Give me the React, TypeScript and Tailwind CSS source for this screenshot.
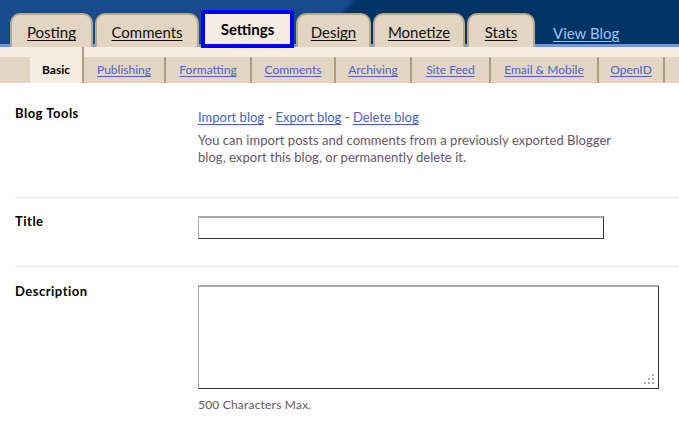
import React from 'react';

const mainTabs = [
    { label: 'Posting', w: 'w-[83px]' },
    { label: 'Comments', w: 'w-[104px]' },
    { label: 'Settings', w: 'w-[93px]', active: true },
    { label: 'Design', w: 'w-[75px]' },
    { label: 'Monetize', w: 'w-[92px]' },
    { label: 'Stats', w: 'w-[68px]' },
];

const subTabs = [
    { label: 'Basic', w: 'w-[54px]', active: true },
    { label: 'Publishing', w: 'w-[82px]' },
    { label: 'Formatting', w: 'w-[86px]' },
    { label: 'Comments', w: 'w-[84px]' },
    { label: 'Archiving', w: 'w-[76px]' },
    { label: 'Site Feed', w: 'w-[79px]' },
    { label: 'Email & Mobile', w: 'w-[108px]' },
    { label: 'OpenID', w: 'w-[66px]' },
];

const Row: React.FC<{ label: string; pt: string; pb: string; children: React.ReactNode; last?: boolean }> = ({ label, pt, pb, children, last }) => (
    <div className={`flex ml-[15px] ${pt} ${pb} ${last ? '' : 'border-b border-[#e8e8e8]'}`}>
        <div className="w-[183px] shrink-0 text-[13px] leading-[17px] font-bold tracking-[0.5px] text-black">{label}</div>
        <div className="flex-1">{children}</div>
    </div>
);

const App: React.FC = () => {
    return (
        <div className="w-[679px] h-[424px] overflow-hidden bg-white font-['Lato',sans-serif]">
            {/* header */}
            <div className="h-[47px] flex items-end bg-[radial-gradient(ellipse_235px_120px_at_140px_-45px,#1a4d90_0%,#164a8c_97%,#003366_100%)] border-b-[3px] border-[#6b97f0]">
                <div className="flex items-end pl-[10px] gap-[2px] -mb-[3px]">
                    {mainTabs.map(t =>
                        t.active ? (
                            <div key={t.label} className={`${t.w} h-[38px] -mb-[1px] flex items-center justify-center bg-[#f5ede3] border-[4px] border-[#0000ff] rounded-t-[3px] text-[15px] font-bold text-black relative`}>
                                {t.label}
                            </div>
                        ) : (
                            <div key={t.label} className={`${t.w} h-[34px] flex items-center justify-center pt-[3px] bg-[#e2d6c2] border-2 border-b-0 border-[#b7a78c] rounded-t-[10px] text-[15px] text-[#111] underline underline-offset-2`}>
                                {t.label}
                            </div>
                        )
                    )}
                    <a className="ml-[16px] mb-[5px] text-[15px] text-[#9cc3f5] underline underline-offset-2 leading-[18px]">View Blog</a>
                </div>
            </div>
            {/* cream band + sub nav */}
            <div className="h-[10px] bg-[#f5ece2]" />
            <div className="h-[26px] flex bg-[#e2d6c2] pl-[30px]">
                {subTabs.map(t => (
                    <div
                        key={t.label}
                        className={`${t.w} shrink-0 flex items-center justify-center text-[12px] border-r-2 border-[#b09c80] ${t.active ? 'bg-[#f5ece2] text-black font-bold -mt-[10px] pt-[10px]' : 'text-[#4a62d4] underline underline-offset-2'}`}
                    >
                        {t.label}
                    </div>
                ))}
            </div>

            {/* content */}
            <Row label="Blog Tools" pt="pt-[22px]" pb="pb-[31px]">
                <div className="mt-[4px] text-[13px] leading-[17px] text-[#555]">
                    <a className="text-[#3f5fd2] underline underline-offset-2">Import blog</a>
                    {' - '}
                    <a className="text-[#3f5fd2] underline underline-offset-2">Export blog</a>
                    {' - '}
                    <a className="text-[#3f5fd2] underline underline-offset-2">Delete blog</a>
                </div>
                <p className="mt-[6px] w-[425px] text-[13px] leading-[17px] tracking-[0.05px] text-[#665566]">
                    You can import posts and comments from a previously exported Blogger blog, export this blog, or permanently delete it.
                </p>
            </Row>
            <Row label="Title" pt="pt-[15px]" pb="pb-[27px]">
                <input
                    type="text"
                    className="mt-[3px] block w-[406px] h-[23px] bg-white border border-t-2 border-t-[#a9a9a9] border-l-[#a9a9a9] border-r-[#333] border-b-[#333] outline-none"
                />
            </Row>
            <Row label="Description" pt="pt-[16px]" pb="pb-[10px]" last>
                <div className="relative mt-[2px] w-[461px] h-[104px]">
                    <textarea className="block w-full h-full resize-none bg-white border border-t-2 border-t-[#a9a9a9] border-l-[#a9a9a9] border-r-[#333] border-b-[#333] outline-none" />
                    <svg className="absolute right-[5px] bottom-[5px]" width="10" height="10" viewBox="0 0 10 10">
                        <rect x="8" y="0" width="2" height="2" fill="#b0b0b0" />
                        <rect x="4" y="4" width="2" height="2" fill="#b0b0b0" />
                        <rect x="8" y="4" width="2" height="2" fill="#b0b0b0" />
                        <rect x="0" y="8" width="2" height="2" fill="#b0b0b0" />
                        <rect x="4" y="8" width="2" height="2" fill="#b0b0b0" />
                        <rect x="8" y="8" width="2" height="2" fill="#b0b0b0" />
                    </svg>
                </div>
                <div className="mt-[9px] text-[12px] leading-[14px] tracking-[0.2px] text-[#665566]">500 Characters Max.</div>
            </Row>
        </div>
    );
};

export default App;
